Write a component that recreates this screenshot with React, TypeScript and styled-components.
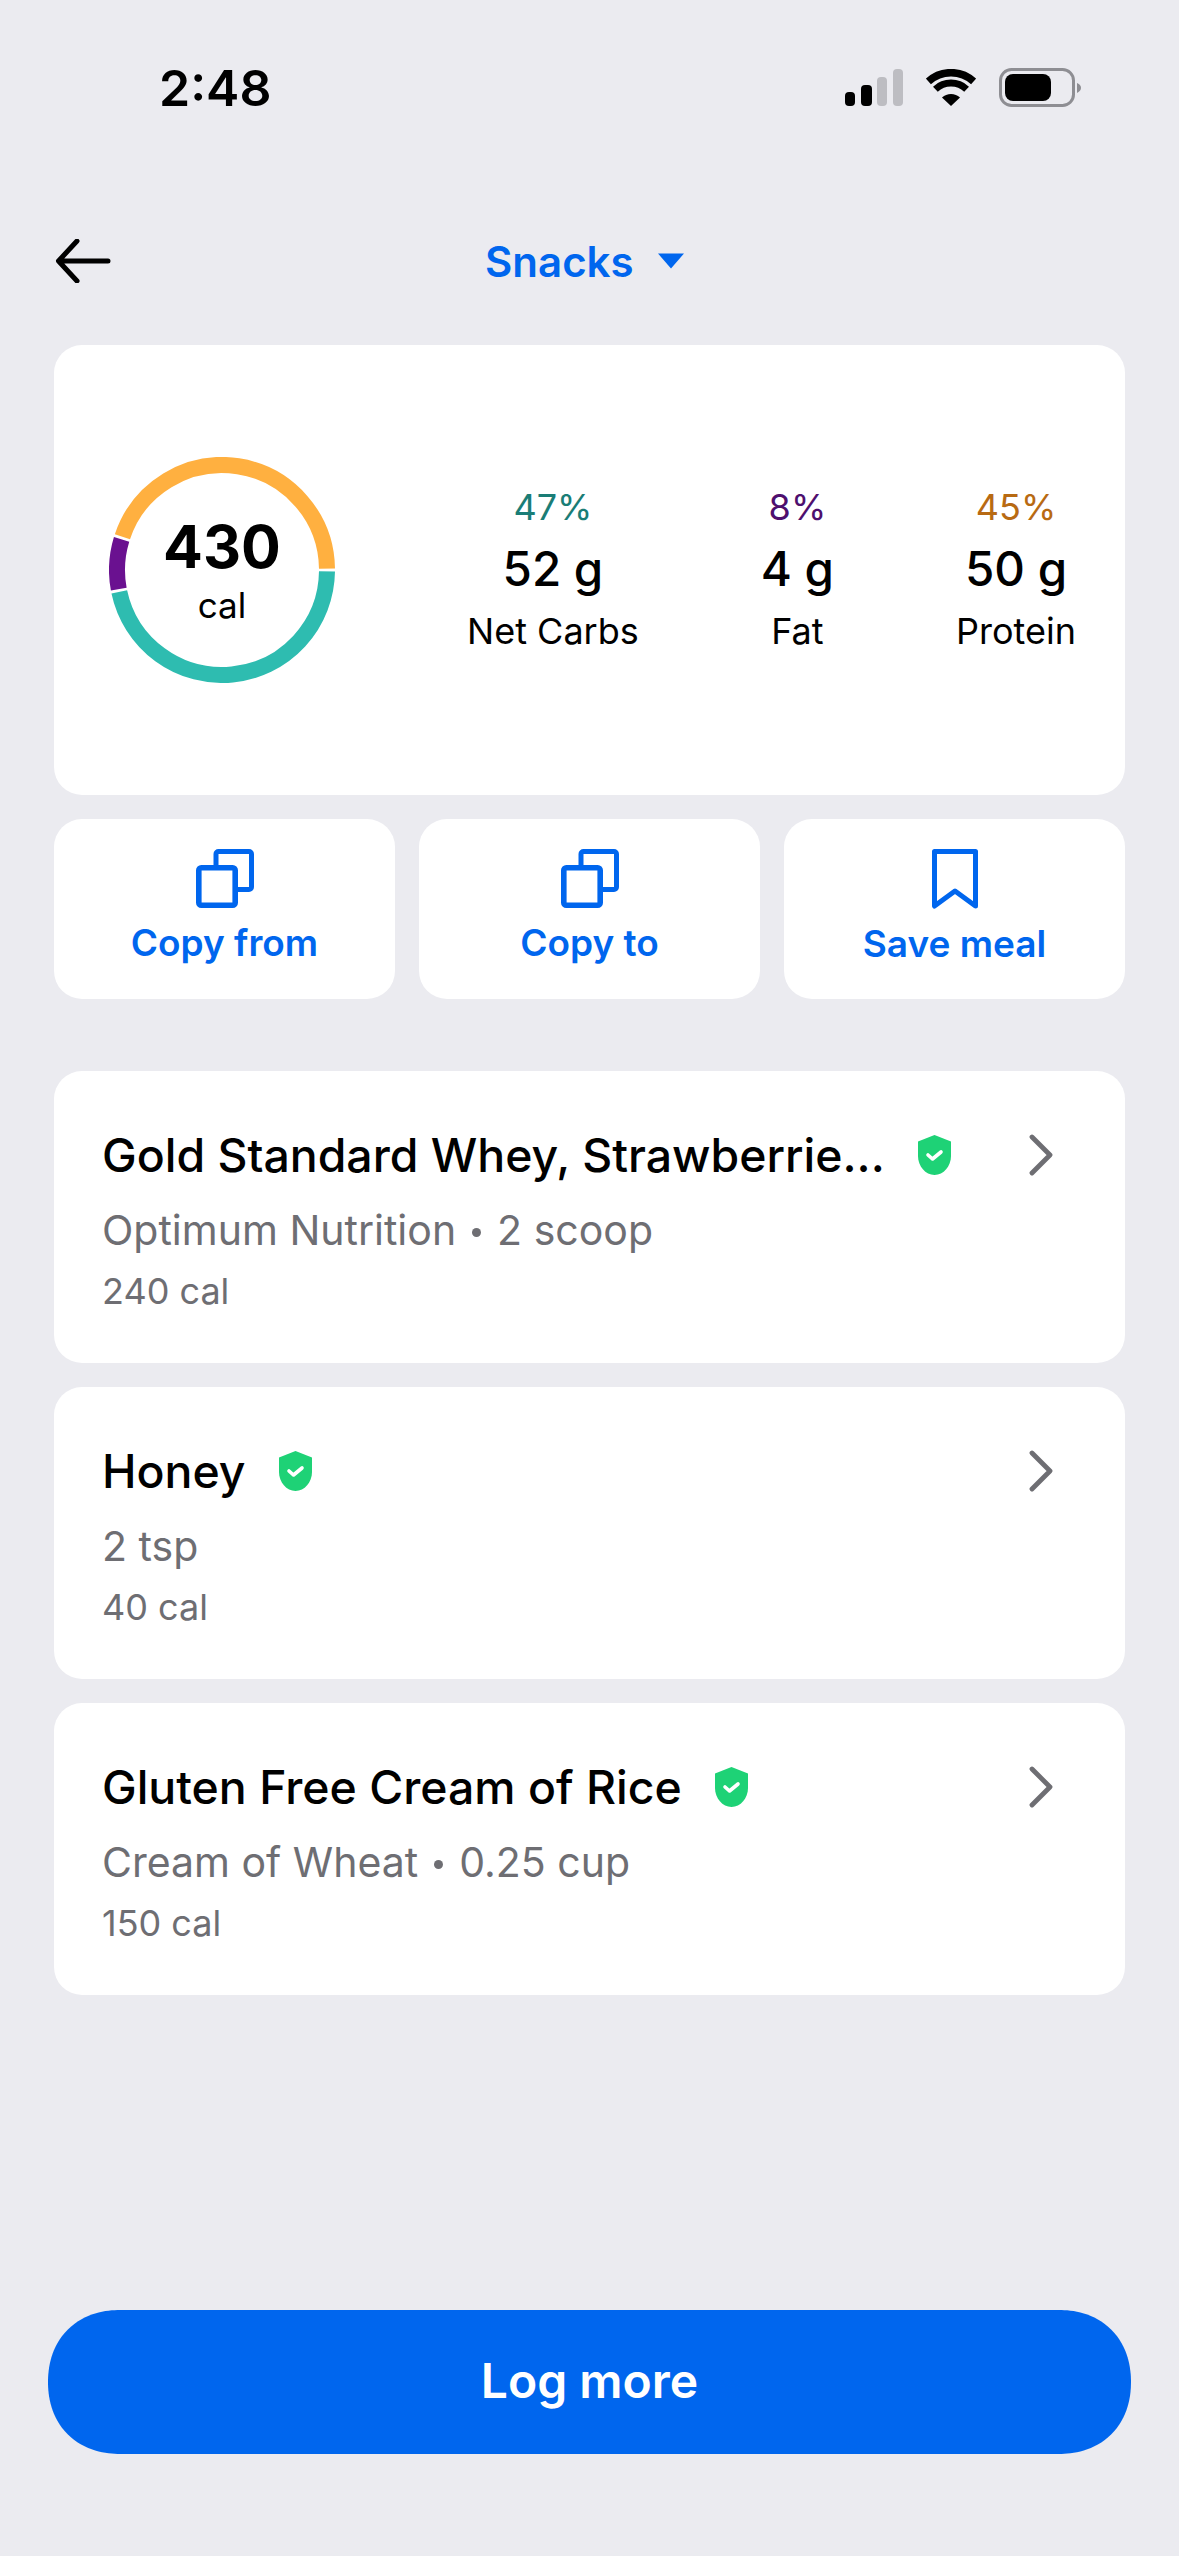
import React from "react";
import styled, { createGlobalStyle } from "styled-components";

const BLUE = "#0066ee";

const GlobalStyle = createGlobalStyle`
    html, body {
        margin: 0;
        padding: 0;
        background: #ebebf0;
        font-family: "Inter", "Liberation Sans", sans-serif;
        -webkit-font-smoothing: antialiased;
    }
    * {
        box-sizing: border-box;
    }
`;

// ring geometry, angles in degrees clockwise from 3 o'clock
const RING_CENTER = 113;
const RING_RADIUS = 105;
const segments = [
    { from: 0.8, to: 168, color: "#2ebcb0" },
    { from: 169.5, to: 197, color: "#6a1190" },
    { from: 198.5, to: 359.2, color: "#ffb040" },
];

const arcPath = (from: number, to: number) => {
    const point = (deg: number) => {
        const rad = (deg * Math.PI) / 180;
        return `${RING_CENTER + RING_RADIUS * Math.cos(rad)} ${
            RING_CENTER + RING_RADIUS * Math.sin(rad)
        }`;
    };
    const large = to - from > 180 ? 1 : 0;
    return `M ${point(from)} A ${RING_RADIUS} ${RING_RADIUS} 0 ${large} 1 ${point(to)}`;
};

const macros = [
    { pct: "47%", amount: "52 g", label: "Net Carbs", color: "#1a7d76" },
    { pct: "8%", amount: "4 g", label: "Fat", color: "#4e0f6e" },
    { pct: "45%", amount: "50 g", label: "Protein", color: "#b86a12" },
];

const foods = [
    { name: "Gold Standard Whey, Strawberrie...", detail: "Optimum Nutrition", serving: "2 scoop", cal: "240 cal" },
    { name: "Honey", detail: "", serving: "2 tsp", cal: "40 cal" },
    { name: "Gluten Free Cream of Rice", detail: "Cream of Wheat", serving: "0.25 cup", cal: "150 cal" },
];

const SignalIcon = () => (
    <svg width="58" height="37" viewBox="0 0 58 37">
        <rect x="0" y="23" width="10" height="14" rx="4" fill="#000" />
        <rect x="16" y="16" width="11" height="21" rx="4" fill="#000" />
        <rect x="32" y="8" width="10" height="29" rx="4" fill="#bdbdc2" />
        <rect x="48" y="0" width="10" height="37" rx="4" fill="#bdbdc2" />
    </svg>
);

const WifiIcon = () => (
    <svg width="50" height="37" viewBox="0 0 50 37">
        <path d="M2.4 12.4 A33.5 33.5 0 0 1 47.6 12.4" fill="none" stroke="#000" strokeWidth="7.5" />
        <path d="M9.4 20.2 A23 23 0 0 1 40.6 20.2" fill="none" stroke="#000" strokeWidth="7" />
        <path d="M25 37 L16 28.6 A13 13 0 0 1 34 28.6 Z" fill="#000" />
    </svg>
);

const BatteryIcon = () => (
    <svg width="82" height="39" viewBox="0 0 82 39">
        <rect x="1.5" y="1.5" width="73" height="36" rx="11" fill="none" stroke="#8e8e93" strokeWidth="3" />
        <rect x="6" y="6" width="46" height="27" rx="8" fill="#000" />
        <path d="M78 15 C81 16 82 18 82 20 C82 22 81 23 78 25 Z" fill="#8e8e93" />
    </svg>
);

const BackArrow = () => (
    <svg width="56" height="44" viewBox="0 0 56 44">
        <path
            d="M53 22 H4 M22 2 L3.5 22 L22 42"
            fill="none"
            stroke="#000"
            strokeWidth="5"
            strokeLinecap="round"
            strokeLinejoin="round"
        />
    </svg>
);

const CopyIcon = () => (
    <svg width="58" height="59" viewBox="0 0 58 59">
        <rect x="20" y="2.5" width="35.5" height="38" rx="2.5" fill="#fff" stroke={BLUE} strokeWidth="5" />
        <rect x="2.8" y="18.8" width="36.4" height="37.4" rx="2.5" fill="#fff" stroke={BLUE} strokeWidth="5.6" />
    </svg>
);

const BookmarkIcon = () => (
    <svg width="46" height="60" viewBox="0 0 46 60">
        <path
            d="M2.5 2.5 H43.5 V57 L23 42 L2.5 57 Z"
            fill="none"
            stroke={BLUE}
            strokeWidth="5"
            strokeLinejoin="round"
        />
    </svg>
);

const VerifiedIcon = () => (
    <svg width="33" height="40" viewBox="0 0 33 40">
        <path
            d="M16.5 0 L33 6.5 V21 C33 31 25.5 40 16.5 40 C7.5 40 0 31 0 21 V6.5 Z"
            fill="#1ed276"
        />
        <path
            d="M10 20 L14.5 24 L23 17"
            fill="none"
            stroke="#fff"
            strokeWidth="3.6"
            strokeLinecap="round"
            strokeLinejoin="round"
        />
    </svg>
);

const Chevron = () => (
    <svg width="24" height="42" viewBox="0 0 24 42">
        <path
            d="M3 3 L21 21 L3 39"
            fill="none"
            stroke="#6e6e73"
            strokeWidth="4.8"
            strokeLinecap="round"
            strokeLinejoin="round"
        />
    </svg>
);

export default function App() {
    return (
        <>
            <GlobalStyle />
            <Page>
                <StatusBar>
                    <Time>2:48</Time>
                    <StatusIcons>
                        <SignalIcon />
                        <WifiIcon />
                        <BatteryIcon />
                    </StatusIcons>
                </StatusBar>
                <Nav>
                    <BackArrow />
                    <NavTitle>
                        Snacks
                        <Caret />
                    </NavTitle>
                </Nav>
                <Content>
                    <SummaryCard>
                        <Ring>
                            <svg width="226" height="226" viewBox="0 0 226 226">
                                {segments.map((s) => (
                                    <path
                                        key={s.color}
                                        d={arcPath(s.from, s.to)}
                                        fill="none"
                                        stroke={s.color}
                                        strokeWidth="16"
                                    />
                                ))}
                            </svg>
                            <RingText>
                                <Calories>430</Calories>
                                <CaloriesUnit>cal</CaloriesUnit>
                            </RingText>
                        </Ring>
                        <Macros>
                            {macros.map((m) => (
                                <Macro key={m.label}>
                                    <MacroPct $color={m.color}>{m.pct}</MacroPct>
                                    <MacroAmount>{m.amount}</MacroAmount>
                                    <MacroLabel>{m.label}</MacroLabel>
                                </Macro>
                            ))}
                        </Macros>
                    </SummaryCard>
                    <Actions>
                        <ActionButton>
                            <CopyIcon />
                            <ActionLabel>Copy from</ActionLabel>
                        </ActionButton>
                        <ActionButton>
                            <CopyIcon />
                            <ActionLabel>Copy to</ActionLabel>
                        </ActionButton>
                        <ActionButton>
                            <BookmarkIcon />
                            <ActionLabel>Save meal</ActionLabel>
                        </ActionButton>
                    </Actions>
                    <FoodList>
                        {foods.map((f) => (
                            <FoodCard key={f.name}>
                                <FoodInfo>
                                    <FoodTitle>
                                        <FoodName>{f.name}</FoodName>
                                        <VerifiedIcon />
                                    </FoodTitle>
                                    <FoodDetail>
                                        {f.detail && (
                                            <>
                                                {f.detail}
                                                <Dot />
                                            </>
                                        )}
                                        {f.serving}
                                    </FoodDetail>
                                    <FoodCal>{f.cal}</FoodCal>
                                </FoodInfo>
                                <ChevronSlot>
                                    <Chevron />
                                </ChevronSlot>
                            </FoodCard>
                        ))}
                    </FoodList>
                </Content>
                <LogButton>Log more</LogButton>
            </Page>
        </>
    );
}

const Page = styled.div`
    width: 1179px;
    height: 2556px;
    background: #ebebf0;
    display: flex;
    flex-direction: column;
    overflow: hidden;
`;

const StatusBar = styled.div`
    height: 68px;
    margin-top: 68px;
    padding: 0 98px 0 159px;
    display: flex;
    align-items: center;
    justify-content: space-between;
`;

const Time = styled.div`
    font-size: 50px;
    font-weight: 600;
    line-height: 40px;
    color: #000;
    margin-top: -28px;
`;

const StatusIcons = styled.div`
    display: flex;
    align-items: center;
    gap: 23px;
    margin-top: -30px;
`;

const Nav = styled.div`
    position: relative;
    height: 100px;
    margin-top: 75px;
    padding-left: 55px;
    display: flex;
    align-items: center;
`;

const NavTitle = styled.div`
    position: absolute;
    left: 485px;
    top: 50%;
    transform: translateY(-50%);
    display: flex;
    align-items: center;
    gap: 24px;
    font-size: 42px;
    font-weight: 600;
    color: ${BLUE};
`;

const Caret = styled.span`
    width: 0;
    height: 0;
    border-left: 13px solid transparent;
    border-right: 13px solid transparent;
    border-top: 15px solid ${BLUE};
`;

const Content = styled.div`
    margin-top: 34px;
    padding: 0 54px;
    display: flex;
    flex-direction: column;
`;

const SummaryCard = styled.div`
    height: 450px;
    background: #fff;
    border-radius: 28px;
    padding: 0 49px 0 55px;
    display: flex;
    align-items: center;
    justify-content: space-between;
`;

const Ring = styled.div`
    position: relative;
    width: 226px;
    height: 226px;
    svg {
        display: block;
    }
`;

const RingText = styled.div`
    position: absolute;
    inset: 0;
    display: flex;
    flex-direction: column;
    align-items: center;
    justify-content: center;
`;

const Calories = styled.div`
    font-size: 59px;
    font-weight: 700;
    line-height: 68px;
    color: #000;
`;

const CaloriesUnit = styled.div`
    margin-top: 2px;
    font-size: 35px;
    line-height: 44px;
    color: #000;
`;

const Macros = styled.div`
    display: flex;
    gap: 122px;
`;

const Macro = styled.div`
    display: flex;
    flex-direction: column;
    align-items: center;
`;

const MacroPct = styled.div<{ $color: string }>`
    font-size: 36px;
    line-height: 42px;
    color: ${(props) => props.$color};
`;

const MacroAmount = styled.div`
    margin: 15px 0 13px;
    font-size: 47.5px;
    font-weight: 450;
    line-height: 52px;
    color: #000;
`;

const MacroLabel = styled.div`
    font-size: 36px;
    line-height: 46px;
    color: #000;
`;

const Actions = styled.div`
    margin-top: 24px;
    display: grid;
    grid-template-columns: repeat(3, 1fr);
    gap: 24px;
`;

const ActionButton = styled.div`
    height: 180px;
    background: #fff;
    border-radius: 28px;
    padding-top: 30px;
    display: flex;
    flex-direction: column;
    align-items: center;
    svg {
        display: block;
    }
`;

const ActionLabel = styled.div`
    margin-top: 13px;
    font-size: 37px;
    font-weight: 600;
    line-height: 44px;
    color: ${BLUE};
`;

const FoodList = styled.div`
    margin-top: 72px;
    display: flex;
    flex-direction: column;
    gap: 24px;
`;

const FoodCard = styled.div`
    height: 292px;
    background: #fff;
    border-radius: 28px;
    padding: 52px 72px 0 48px;
    display: flex;
    justify-content: space-between;
    align-items: flex-start;
`;

const FoodInfo = styled.div`
    display: flex;
    flex-direction: column;
`;

const FoodTitle = styled.div`
    display: flex;
    align-items: center;
    gap: 33px;
    height: 64px;
    svg {
        flex: none;
    }
`;

const FoodName = styled.div`
    font-size: 46.4px;
    font-weight: 500;
    color: #000;
    white-space: nowrap;
`;

const FoodDetail = styled.div`
    margin-top: 18px;
    font-size: 41px;
    line-height: 50px;
    color: #6e6e73;
    display: flex;
    align-items: center;
    white-space: pre;
`;

const Dot = styled.span`
    width: 9px;
    height: 9px;
    border-radius: 50%;
    background: #6e6e73;
    margin: 4px 16px 0;
`;

const FoodCal = styled.div`
    margin-top: 13px;
    font-size: 36px;
    line-height: 46px;
    color: #6e6e73;
`;

const ChevronSlot = styled.div`
    height: 64px;
    display: flex;
    align-items: center;
`;

const LogButton = styled.div`
    margin: auto 48px 102px 48px;
    height: 144px;
    padding-bottom: 3px;
    background: ${BLUE};
    border-radius: 72px;
    corner-shape: superellipse(1.12);
    display: flex;
    align-items: center;
    justify-content: center;
    font-size: 48px;
    font-weight: 600;
    color: #fff;
`;
